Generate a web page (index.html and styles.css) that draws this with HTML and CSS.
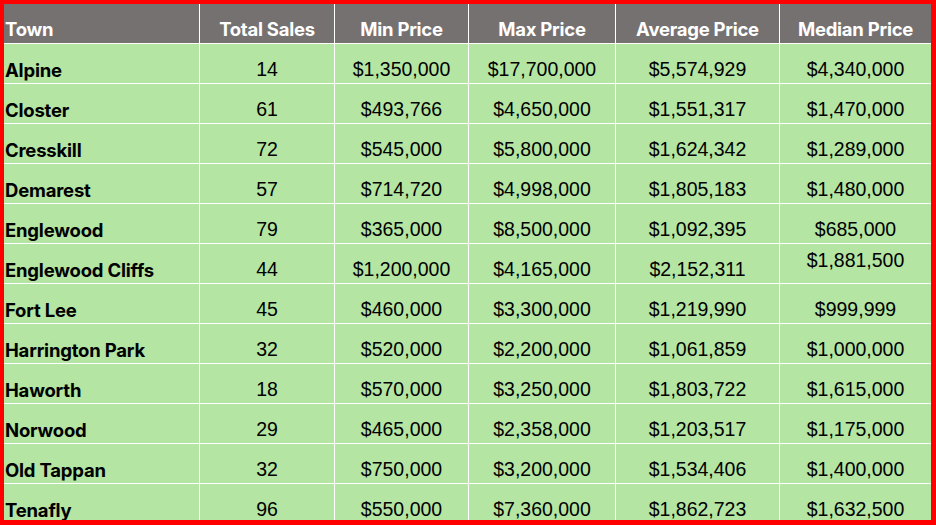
FILE: index.html
```html
<!DOCTYPE html>
<html lang="en">
<head>
<meta charset="utf-8">
<title>Town Sales</title>
<link rel="stylesheet" href="styles.css">
</head>
<body>
<div class="frame">
  <div class="grid">
    <div class="cell head town">Town</div>
    <div class="cell head">Total Sales</div>
    <div class="cell head">Min Price</div>
    <div class="cell head">Max Price</div>
    <div class="cell head">Average Price</div>
    <div class="cell head">Median Price</div>

    <div class="cell town">Alpine</div><div class="cell num">14</div><div class="cell num">$1,350,000</div><div class="cell num">$17,700,000</div><div class="cell num">$5,574,929</div><div class="cell num">$4,340,000</div>
    <div class="cell town">Closter</div><div class="cell num">61</div><div class="cell num">$493,766</div><div class="cell num">$4,650,000</div><div class="cell num">$1,551,317</div><div class="cell num">$1,470,000</div>
    <div class="cell town">Cresskill</div><div class="cell num">72</div><div class="cell num">$545,000</div><div class="cell num">$5,800,000</div><div class="cell num">$1,624,342</div><div class="cell num">$1,289,000</div>
    <div class="cell town">Demarest</div><div class="cell num">57</div><div class="cell num">$714,720</div><div class="cell num">$4,998,000</div><div class="cell num">$1,805,183</div><div class="cell num">$1,480,000</div>
    <div class="cell town">Englewood</div><div class="cell num">79</div><div class="cell num">$365,000</div><div class="cell num">$8,500,000</div><div class="cell num">$1,092,395</div><div class="cell num">$685,000</div>
    <div class="cell town">Englewood Cliffs</div><div class="cell num">44</div><div class="cell num">$1,200,000</div><div class="cell num">$4,165,000</div><div class="cell num">$2,152,311</div><div class="cell num raised">$1,881,500</div>
    <div class="cell town">Fort Lee</div><div class="cell num">45</div><div class="cell num">$460,000</div><div class="cell num">$3,300,000</div><div class="cell num">$1,219,990</div><div class="cell num">$999,999</div>
    <div class="cell town">Harrington Park</div><div class="cell num">32</div><div class="cell num">$520,000</div><div class="cell num">$2,200,000</div><div class="cell num">$1,061,859</div><div class="cell num">$1,000,000</div>
    <div class="cell town">Haworth</div><div class="cell num">18</div><div class="cell num">$570,000</div><div class="cell num">$3,250,000</div><div class="cell num">$1,803,722</div><div class="cell num">$1,615,000</div>
    <div class="cell town">Norwood</div><div class="cell num">29</div><div class="cell num">$465,000</div><div class="cell num">$2,358,000</div><div class="cell num">$1,203,517</div><div class="cell num">$1,175,000</div>
    <div class="cell town">Old Tappan</div><div class="cell num">32</div><div class="cell num">$750,000</div><div class="cell num">$3,200,000</div><div class="cell num">$1,534,406</div><div class="cell num">$1,400,000</div>
    <div class="cell town">Tenafly</div><div class="cell num">96</div><div class="cell num">$550,000</div><div class="cell num">$7,360,000</div><div class="cell num">$1,862,723</div><div class="cell num">$1,632,500</div>
  </div>
</div>
</body>
</html>
```
FILE: styles.css
```css
html, body {
  margin: 0;
  padding: 0;
  background: #ff0000;
}

.frame {
  box-sizing: border-box;
  width: 936px;
  height: 525px;
  border-style: solid;
  border-color: #ff0000;
  border-width: 4px 5px 5px 4px;
  overflow: hidden;
  background: #ffffff;
}

.grid {
  display: grid;
  grid-template-columns: 195px 134px 133px 146px 163px 151px;
  grid-template-rows: 39px;
  grid-auto-rows: 39px;
  gap: 1px;
  background: #ffffff;
}

.cell {
  display: flex;
  align-items: flex-end;
  justify-content: center;
  padding-bottom: 4px;
  box-sizing: border-box;
  background: #b4e5a2;
  color: #000000;
  line-height: 1;
  white-space: nowrap;
}

.num {
  font-family: "Liberation Sans", Arial, sans-serif;
  font-size: 19.5px;
}

.town {
  justify-content: flex-start;
  padding-left: 1px;
  font-family: Inter, "Noto Sans", sans-serif;
  font-weight: 700;
  font-size: 18.5px;
  letter-spacing: -0.2px;
}

.head {
  background: #767171;
  color: #ffffff;
  font-family: Inter, "Noto Sans", sans-serif;
  font-weight: 700;
  font-size: 18.5px;
  letter-spacing: -0.25px;
  padding-bottom: 5px;
}

.raised {
  padding-bottom: 13px;
}
```
